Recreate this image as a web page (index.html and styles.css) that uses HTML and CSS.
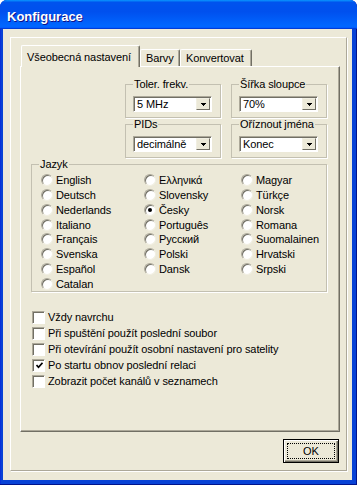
FILE: index.html
```html
<!DOCTYPE html>
<html lang="cs">
<head>
  <meta charset="UTF-8">
  <title>Konfigurace</title>
  <link rel="stylesheet" href="styles.css">
</head>
<body>

  <div class="window">
    <div class="titlebar">Konfigurace</div>

    <div class="client">
      <div class="frame">

        <div class="tabs">
          <div class="tab active">Všeobecná nastavení</div>
          <div class="tab tab-barvy">Barvy</div>
          <div class="tab tab-konv">Konvertovat</div>
        </div>

        <div class="page">

          <div class="top-groups">
            <fieldset class="group">
              <legend>Toler. frekv.</legend>
              <div class="combo"><span class="combo-text">5 MHz</span><span class="combo-btn"><svg width="5" height="3" viewBox="0 0 5 3"><rect x="0" y="0" width="5" height="1"/><rect x="1" y="1" width="3" height="1"/><rect x="2" y="2" width="1" height="1"/></svg></span></div>
            </fieldset>
            <fieldset class="group">
              <legend>Šířka sloupce</legend>
              <div class="combo"><span class="combo-text">70%</span><span class="combo-btn"><svg width="5" height="3" viewBox="0 0 5 3"><rect x="0" y="0" width="5" height="1"/><rect x="1" y="1" width="3" height="1"/><rect x="2" y="2" width="1" height="1"/></svg></span></div>
            </fieldset>
            <fieldset class="group">
              <legend>PIDs</legend>
              <div class="combo"><span class="combo-text">decimálně</span><span class="combo-btn"><svg width="5" height="3" viewBox="0 0 5 3"><rect x="0" y="0" width="5" height="1"/><rect x="1" y="1" width="3" height="1"/><rect x="2" y="2" width="1" height="1"/></svg></span></div>
            </fieldset>
            <fieldset class="group">
              <legend>Oříznout jména</legend>
              <div class="combo"><span class="combo-text">Konec</span><span class="combo-btn"><svg width="5" height="3" viewBox="0 0 5 3"><rect x="0" y="0" width="5" height="1"/><rect x="1" y="1" width="3" height="1"/><rect x="2" y="2" width="1" height="1"/></svg></span></div>
            </fieldset>
          </div>

          <fieldset class="group lang">
            <legend>Jazyk</legend>
            <div class="radios">
              <div class="radio"><span class="dot"></span>English</div>
              <div class="radio"><span class="dot"></span>Ελληνικά</div>
              <div class="radio"><span class="dot"></span>Magyar</div>
              <div class="radio"><span class="dot"></span>Deutsch</div>
              <div class="radio"><span class="dot"></span>Slovensky</div>
              <div class="radio"><span class="dot"></span>Türkçe</div>
              <div class="radio"><span class="dot"></span>Nederlands</div>
              <div class="radio"><span class="dot checked"></span>Česky</div>
              <div class="radio"><span class="dot"></span>Norsk</div>
              <div class="radio"><span class="dot"></span>Italiano</div>
              <div class="radio"><span class="dot"></span>Português</div>
              <div class="radio"><span class="dot"></span>Romana</div>
              <div class="radio"><span class="dot"></span>Français</div>
              <div class="radio"><span class="dot"></span>Русский</div>
              <div class="radio"><span class="dot"></span>Suomalainen</div>
              <div class="radio"><span class="dot"></span>Svenska</div>
              <div class="radio"><span class="dot"></span>Polski</div>
              <div class="radio"><span class="dot"></span>Hrvatski</div>
              <div class="radio"><span class="dot"></span>Español</div>
              <div class="radio"><span class="dot"></span>Dansk</div>
              <div class="radio"><span class="dot"></span>Srpski</div>
              <div class="radio"><span class="dot"></span>Catalan</div>
            </div>
          </fieldset>

          <div class="checks">
            <div class="check"><span class="box"></span>Vždy navrchu</div>
            <div class="check"><span class="box"></span>Při spuštění použít poslední soubor</div>
            <div class="check"><span class="box"></span>Při otevírání použít osobní nastavení pro satelity</div>
            <div class="check"><span class="box"><svg width="7" height="7" viewBox="0 0 7 7"><path d="M0.5 3 L2.5 5.2 L6.5 0.8" fill="none" stroke="#000" stroke-width="1.7"/></svg></span>Po startu obnov poslední relaci</div>
            <div class="check"><span class="box"></span>Zobrazit počet kanálů v seznamech</div>
          </div>

        </div>

        <div class="buttons">
          <button class="btn-ok"><span class="focus">OK</span></button>
        </div>

      </div>
    </div>
  </div>

</body>
</html>
```

FILE: styles.css
```css
body {
  margin: 0;
  background: #fff;
  font-family: 'Liberation Sans', Arial, sans-serif;
  font-size: 11px;
  letter-spacing: -0.1px;
  color: #000;
}

.window {
  width: 357px;
  height: 485px;
  display: flex;
  flex-direction: column;
  background: #0842d6;
  border-radius: 7px 7px 0 0;
  overflow: hidden;
  box-shadow: inset -1px -1px #00138c, inset 1px 1px #0831d9;
}

.titlebar {
  height: 29px;
  box-sizing: border-box;
  padding: 3px 0 0 7px;
  display: flex;
  align-items: center;
  background: linear-gradient(180deg, #0997ff, #0053ee 8%, #0050ee 40%, #06f 88%, #06f 93%, #005bff 95%, #003dd7 96%, #003dd7);
  color: #fff;
  font-weight: bold;
  font-size: 13px;
  letter-spacing: 0;
  text-shadow: 1px 1px #0f1089;
}

.client {
  flex: 1;
  margin: 0 5px 5px 3px;
  background: #ece9d8;
  padding: 8px 5px 9px 7px;
}

.frame {
  border: 1px solid;
  border-color: #fff #aca899 #aca899 #fff;
  box-shadow: 1px 1px 0 #fff;
  padding: 7px 6px 7px 9px;
}

/* tabs */
.tabs {
  display: flex;
  align-items: flex-end;
  height: 21px;
  margin-left: 1px;
}

.tab {
  height: 17px;
  box-sizing: border-box;
  display: flex;
  align-items: center;
  padding-left: 5px;
  background: #ece9d8;
  border-top: 1px solid #fff;
  border-left: 1px solid #fff;
  border-right: 1px solid #716f64;
  box-shadow: inset -1px 0 #aca899;
  border-radius: 2px 2px 0 0;
}

.tab.active {
  width: 119px;
  height: 22px;
  margin-bottom: -1px;
  padding-left: 5px;
  position: relative;
  z-index: 1;
}

.tab-barvy { width: 40px; }
.tab-konv { width: 72px; }

.page {
  width: 320px;
  height: 366px;
  box-sizing: border-box;
  border: 1px solid;
  border-color: #fff #716f64 #716f64 #fff;
  box-shadow: inset -1px -1px #aca899;
  padding: 11px 12px 0 10px;
}

/* group boxes */
.group {
  margin: 0;
  padding: 5px 8px 5px 7px;
  min-width: 0;
  border: 1px solid #c3c0b1;
  box-shadow: 1px 1px 0 #fff;
}

.group legend {
  padding: 0 1px;
  line-height: 13px;
}

.top-groups {
  display: grid;
  grid-template-columns: 96px 96px;
  column-gap: 10px;
  justify-content: end;
}

.combo {
  height: 16px;
  box-sizing: border-box;
  display: flex;
  background: #fff;
  border: 1px solid;
  border-color: #aca899 #fff #fff #aca899;
  box-shadow: inset 1px 1px #716f64;
}

.combo-text {
  flex: 1;
  padding: 1px 0 0 3px;
  line-height: 13px;
}

.combo-btn {
  width: 14px;
  margin: 1px 1px 1px 0;
  display: flex;
  align-items: center;
  justify-content: center;
  background: #ece9d8;
  box-sizing: border-box;
  border: 1px solid;
  border-color: #f1efe2 #716f64 #716f64 #f1efe2;
}

/* languages */
.lang {
  margin: 0;
  padding: 2px 0 0 9px;
}

.lang legend {
  margin-left: -2px;
}

.radios {
  display: grid;
  grid-template-columns: 103px 97px 1fr;
  grid-auto-rows: 14.75px;
}

.radio {
  display: flex;
  align-items: center;
  gap: 3px;
  white-space: nowrap;
}

.dot {
  width: 12px;
  height: 12px;
  box-sizing: border-box;
  border-radius: 50%;
  background: #fff;
  border: 1px solid;
  border-color: #aca899 #f1efe2 #f1efe2 #aca899;
  box-shadow: inset 1px 1px #716f64;
  display: flex;
  align-items: center;
  justify-content: center;
  flex: none;
}

.dot.checked::after {
  content: '';
  width: 4px;
  height: 4px;
  border-radius: 50%;
  background: #000;
}

/* checkboxes */
.checks {
  margin: 17px 0 0 1px;
  display: flex;
  flex-direction: column;
}

.check {
  height: 16px;
  display: flex;
  align-items: center;
  gap: 3px;
}

.box {
  width: 13px;
  height: 13px;
  box-sizing: border-box;
  background: #fff;
  border: 1px solid;
  border-color: #aca899 #fff #fff #aca899;
  box-shadow: inset 1px 1px #716f64;
  display: flex;
  align-items: center;
  justify-content: center;
  flex: none;
  padding: 1px 0 0 1px;
}

/* ok */
.buttons {
  display: flex;
  justify-content: flex-end;
  padding: 7px 1px 0 0;
}

.btn-ok {
  width: 56px;
  height: 24px;
  padding: 3px;
  background: #ece9d8;
  border: 1px solid #000;
  box-shadow: inset 1px 1px #fff, inset -1px -1px #716f64, inset -2px -2px #aca899;
  font-family: 'Liberation Sans', Arial, sans-serif;
  font-size: 11px;
  color: #000;
  display: flex;
}

.focus {
  flex: 1;
  display: flex;
  align-items: center;
  justify-content: center;
  border: 1px dotted #000;
}
```
